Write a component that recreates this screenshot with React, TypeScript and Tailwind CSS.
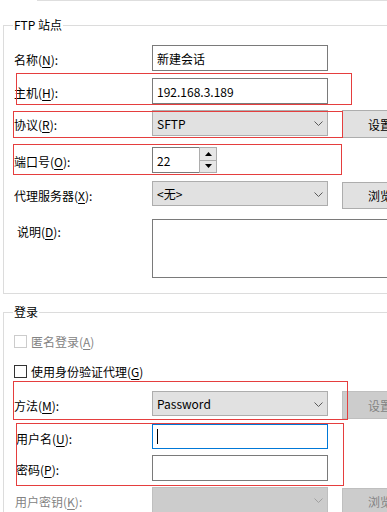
import React from "react";

const font = {
  fontFamily: '"Noto Sans CJK SC", "Noto Sans", sans-serif',
};

function Chevron({ color = "#5a5a5a" }: { color?: string }) {
  return (
    <svg width="9" height="5" viewBox="0 0 9 5" className="block">
      <polyline points="0.5,0.5 4.5,4.5 8.5,0.5" fill="none" stroke={color} strokeWidth="1" />
    </svg>
  );
}

function U({ children }: { children: React.ReactNode }) {
  return <span className="underline underline-offset-[2px]">{children}</span>;
}

export default function App() {
  return (
    <div
      className="relative w-[387px] h-[512px] overflow-hidden bg-white text-[12px] leading-[16px] text-black"
      style={font}
    >
      <div className="ml-[37px] h-px bg-[#dedede]" />

      {/* FTP 站点 */}
      <fieldset className="mt-[16px] ml-[3px] w-[440px] border border-[#dcdcdc] pb-[15px]">
        <legend className="ml-[9px] px-[1px] leading-[16px]">FTP 站点</legend>

        <div className="flex items-start mt-[12px]">
          <div className="w-[148px] pl-[10px] h-[26px] flex items-center pt-[4px]">
            名称(<U>N</U>):
          </div>
          <div className="w-[176px] h-[26px] border border-[#7a7a7a] flex items-center pl-[4px] pt-[1px]">
            新建会话
          </div>
        </div>

        <div className="flex items-start mt-[7px]">
          <div className="w-[148px] pl-[10px] h-[26px] flex items-center pt-[4px]">
            主机(<U>H</U>):
          </div>
          <div className="w-[176px] h-[26px] border border-[#7a7a7a] flex items-center pl-[4px] pt-[1px]">
            192.168.3.189
          </div>
        </div>

        <div className="flex items-start mt-[6px]">
          <div className="w-[148px] pl-[10px] h-[26px] flex items-center pt-[4px]">
            协议(<U>R</U>):
          </div>
          <div className="w-[176px] h-[26px] border border-[#adadad] bg-[#e1e1e1] flex items-center justify-between pl-[4px] pr-[4px] pt-[1px]">
            <span>SFTP</span>
            <Chevron />
          </div>
          <div className="ml-[14px] w-[76px] h-[28px] border border-[#adadad] bg-[#e1e1e1] flex items-center justify-center pt-[1px]">
            设置
          </div>
        </div>

        <div className="flex items-start mt-[9px]">
          <div className="w-[148px] pl-[10px] h-[26px] flex items-center pt-[4px]">
            端口号(<U>O</U>):
          </div>
          <div className="w-[47px] h-[26px] border border-[#7a7a7a] border-r-0 flex items-center pl-[4px] pt-[1px]">
            22
          </div>
          <div className="w-[18px] h-[26px] border border-[#adadad] flex flex-col">
            <div className="flex-1 bg-[#e6e6e6] border-b border-[#adadad] flex items-center justify-center">
              <svg width="7" height="4" viewBox="0 0 7 4">
                <polygon points="0,4 3.5,0 7,4" fill="#000" />
              </svg>
            </div>
            <div className="flex-1 bg-[#e6e6e6] flex items-center justify-center">
              <svg width="7" height="4" viewBox="0 0 7 4">
                <polygon points="0,0 3.5,4 7,0" fill="#000" />
              </svg>
            </div>
          </div>
        </div>

        <div className="flex items-start mt-[8px]">
          <div className="w-[148px] pl-[10px] h-[25px] flex items-center pt-[4px]">
            代理服务器(<U>X</U>):
          </div>
          <div className="w-[176px] h-[25px] border border-[#adadad] bg-[#e1e1e1] flex items-center justify-between pl-[4px] pr-[4px] pt-[1px]">
            <span>&lt;无&gt;</span>
            <Chevron />
          </div>
          <div className="ml-[14px] mt-[1px] w-[76px] h-[27px] border border-[#adadad] bg-[#e1e1e1] flex items-center justify-center pt-[1px]">
            浏览
          </div>
        </div>

        <div className="flex items-start mt-[10px]">
          <div className="w-[148px] pl-[13px] pt-[5px]">说明(<U>D</U>):</div>
          <div className="w-[260px] h-[59px] border border-[#7a7a7a]" />
        </div>
      </fieldset>

      {/* 登录 */}
      <fieldset className="mt-[10px] ml-[3px] w-[440px] border border-[#dcdcdc] pb-[20px]">
        <legend className="ml-[9px] px-[1px] leading-[16px]">登录</legend>

        <div className="flex items-center h-[16px] mt-[13px] pl-[10px] text-[#838383]">
          <div className="w-[13px] h-[13px] border border-[#cccccc] bg-white" />
          <span className="ml-[4px] pt-[1px]">
            匿名登录(<U>A</U>)
          </span>
        </div>

        <div className="flex items-center h-[16px] mt-[14px] pl-[10px]">
          <div className="w-[13px] h-[13px] border border-[#333333] bg-white" />
          <span className="ml-[4px] pt-[1px]">
            使用身份验证代理(<U>G</U>)
          </span>
        </div>

        <div className="flex items-start mt-[12px]">
          <div className="w-[148px] pl-[10px] h-[25px] flex items-center pt-[4px]">
            方法(<U>M</U>):
          </div>
          <div className="w-[176px] h-[25px] border border-[#adadad] bg-[#e1e1e1] flex items-center justify-between pl-[4px] pr-[4px] pt-[1px]">
            <span>Password</span>
            <Chevron />
          </div>
          <div className="ml-[14px] w-[76px] h-[28px] border border-[#bfbfbf] bg-[#cccccc] text-[#838383] flex items-center justify-center pt-[1px]">
            设置
          </div>
        </div>

        <div className="flex items-start mt-[5px]">
          <div className="w-[148px] pl-[12px] h-[25px] flex items-center pt-[4px]">
            用户名(<U>U</U>):
          </div>
          <div className="w-[176px] h-[25px] border border-[#0078d7] flex items-center pl-[4px]">
            <span className="block w-px h-[15px] bg-black" />
          </div>
        </div>

        <div className="flex items-start mt-[6px]">
          <div className="w-[148px] pl-[12px] h-[26px] flex items-center pt-[4px]">
            密码(<U>P</U>):
          </div>
          <div className="w-[176px] h-[26px] border border-[#7a7a7a]" />
        </div>

        <div className="flex items-start mt-[6px] text-[#838383]">
          <div className="w-[148px] pl-[11px] h-[26px] flex items-center pt-[4px]">
            用户密钥(<U>K</U>):
          </div>
          <div className="w-[176px] h-[26px] border border-[#bfbfbf] bg-[#cccccc] flex items-center justify-end pr-[4px]">
            <Chevron color="#a0a0a0" />
          </div>
          <div className="ml-[14px] mt-[1px] w-[76px] h-[27px] border border-[#bfbfbf] bg-[#cccccc] flex items-center justify-center pt-[1px]">
            浏览
          </div>
        </div>
      </fieldset>

      {/* red annotation boxes */}
      <div className="absolute left-[16px] top-[73px] w-[336px] h-[32px] border border-[#e53e3e]" />
      <div className="absolute left-[13px] top-[111px] w-[330px] h-[27px] border border-[#e53e3e]" />
      <div className="absolute left-[13px] top-[144px] w-[329px] h-[31px] border border-[#e53e3e]" />
      <div className="absolute left-[13px] top-[381px] w-[335px] h-[39px] border border-[#e53e3e]" />
      <div className="absolute left-[16px] top-[423px] w-[328px] h-[63px] border border-[#e53e3e]" />
    </div>
  );
}
